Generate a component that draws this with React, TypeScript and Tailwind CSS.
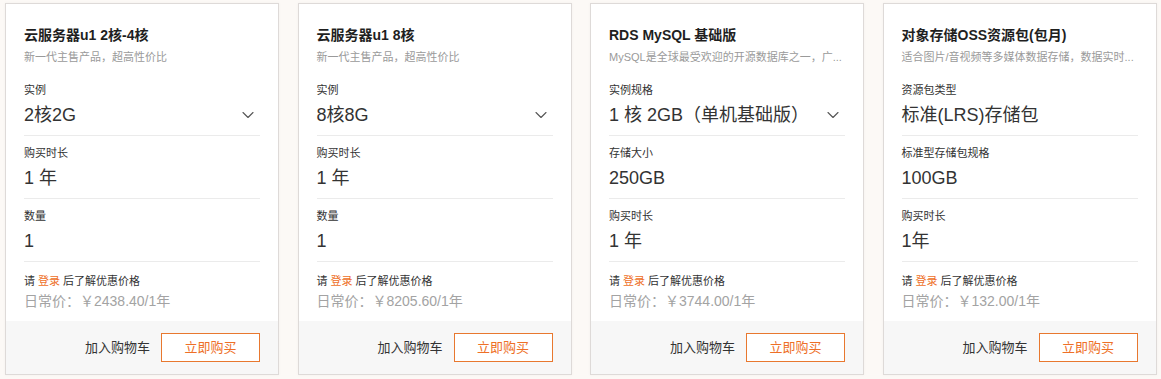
import { ChevronDown } from "lucide-react";

type Field = { label: string; value: string; select?: boolean };

type Product = {
  title: string;
  desc: string;
  fields: Field[];
  price: string;
};

const PRODUCTS: Product[] = [
  {
    title: "云服务器u1 2核-4核",
    desc: "新一代主售产品，超高性价比",
    fields: [
      { label: "实例", value: "2核2G", select: true },
      { label: "购买时长", value: "1 年" },
      { label: "数量", value: "1" },
    ],
    price: "日常价：￥2438.40/1年",
  },
  {
    title: "云服务器u1 8核",
    desc: "新一代主售产品，超高性价比",
    fields: [
      { label: "实例", value: "8核8G", select: true },
      { label: "购买时长", value: "1 年" },
      { label: "数量", value: "1" },
    ],
    price: "日常价：￥8205.60/1年",
  },
  {
    title: "RDS MySQL 基础版",
    desc: "MySQL是全球最受欢迎的开源数据库之一，广...",
    fields: [
      { label: "实例规格", value: "1 核 2GB（单机基础版）", select: true },
      { label: "存储大小", value: "250GB" },
      { label: "购买时长", value: "1 年" },
    ],
    price: "日常价：￥3744.00/1年",
  },
  {
    title: "对象存储OSS资源包(包月)",
    desc: "适合图片/音视频等多媒体数据存储，数据实时...",
    fields: [
      { label: "资源包类型", value: "标准(LRS)存储包" },
      { label: "标准型存储包规格", value: "100GB" },
      { label: "购买时长", value: "1年" },
    ],
    price: "日常价：￥132.00/1年",
  },
];

function ProductCard({ p }: { p: Product }) {
  return (
    <div className="flex w-[274px] shrink-0 flex-col border border-[#dedad8] bg-white shadow-[0_0_3px_rgba(0,0,0,0.04)]">
      <div className="px-[18px] pt-[21px]">
        <h3 className="whitespace-nowrap text-[14px] leading-[20px] font-bold text-[#1f1f1f]">{p.title}</h3>
        <p className="mt-[3px] whitespace-nowrap text-[11px] leading-[18px] text-[#9a9a9a]">{p.desc}</p>
        <div className="mt-[7px]">
          {p.fields.map((f) => (
            <div key={f.label} className="border-b border-[#ebebeb] pt-[8px] pb-[7px]">
              <div className="text-[11px] leading-[18px] text-[#333]">{f.label}</div>
              <div className="mt-[3px] flex items-center justify-between">
                <span className="text-[18px] leading-[26px] text-[#333]">{f.value}</span>
                {f.select && (
                  <ChevronDown size={20} strokeWidth={1.3} className="mr-[2px] text-[#555]" />
                )}
              </div>
            </div>
          ))}
        </div>
        <div className="pt-[10px] pb-[10px]">
          <div className="text-[11px] leading-[18px] text-[#333]">
            请 <span className="text-[#ee6f27]">登录</span> 后了解优惠价格
          </div>
          <div className="mt-[1px] text-[14px] leading-[20px] text-[#a3a3a3]">{p.price}</div>
        </div>
      </div>
      <div className="flex h-[53px] items-center justify-end gap-[11px] bg-[#f7f7f7] px-[18px]">
        <span className="text-[13px] text-[#333]">加入购物车</span>
        <button className="h-[29px] w-[99px] border border-[#e8782f] bg-white text-[13px] text-[#ee6f27]">
          立即购买
        </button>
      </div>
    </div>
  );
}

export default function App() {
  return (
    <div
      className="h-[379px] w-[1161px] bg-[#fcf9f6] pt-[3px] pl-[5px]"
      style={{ fontFamily: '"Liberation Sans", "Noto Sans CJK SC", sans-serif' }}
    >
      <div className="flex gap-[18.5px]">
        {PRODUCTS.map((p) => (
          <ProductCard key={p.title} p={p} />
        ))}
      </div>
    </div>
  );
}
